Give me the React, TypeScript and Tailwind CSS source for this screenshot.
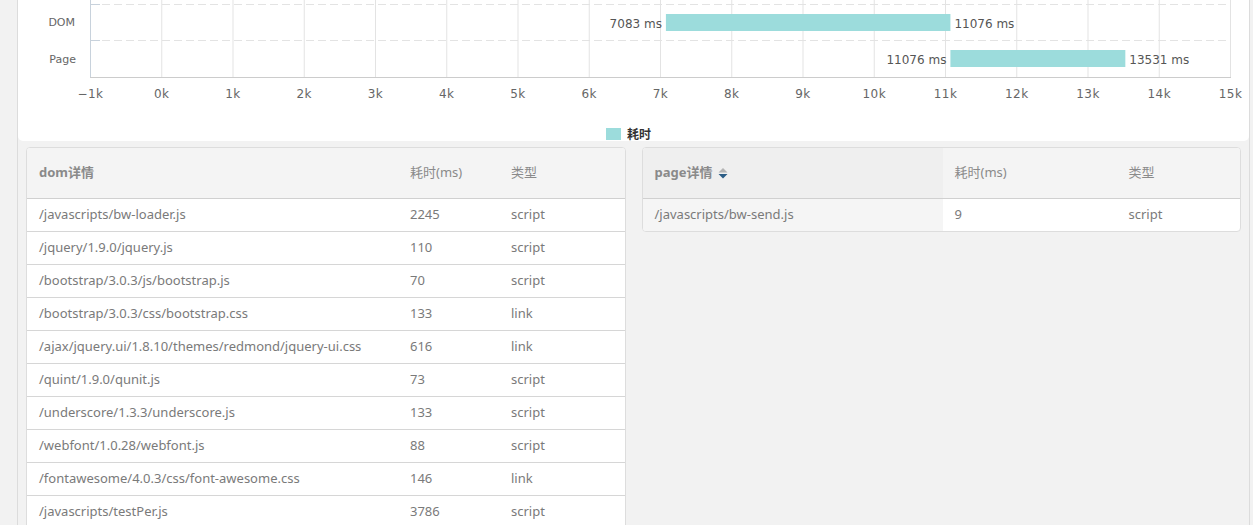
const ticks = Array.from({ length: 17 }, (_, i) => i - 1);

const domRows = [
  ["/javascripts/bw-loader.js", "2245", "script"],
  ["/jquery/1.9.0/jquery.js", "110", "script"],
  ["/bootstrap/3.0.3/js/bootstrap.js", "70", "script"],
  ["/bootstrap/3.0.3/css/bootstrap.css", "133", "link"],
  ["/ajax/jquery.ui/1.8.10/themes/redmond/jquery-ui.css", "616", "link"],
  ["/quint/1.9.0/qunit.js", "73", "script"],
  ["/underscore/1.3.3/underscore.js", "133", "script"],
  ["/webfont/1.0.28/webfont.js", "88", "script"],
  ["/fontawesome/4.0.3/css/font-awesome.css", "146", "link"],
  ["/javascripts/testPer.js", "3786", "script"],
];

// plot area in svg coords
const X0 = 72;
const STEP = 71.25;
const xOf = (k: number) => X0 + (k + 1) * STEP;

function TimelineChart() {
  const font = { fontFamily: "'DejaVu Sans', Verdana, sans-serif" };
  return (
    <svg width="1231" height="141" className="block">
      {/* vertical grid */}
      {ticks.map((k) => (
        <line key={k} x1={xOf(k) + 0.5} x2={xOf(k) + 0.5} y1={0} y2={77} stroke="#e3e3e3" />
      ))}
      {/* dashed category separators */}
      {[4.5, 40.5].map((y) => (
        <g key={y}>
          <line x1={X0} x2={1212} y1={y} y2={y} stroke="#e3e3e3" strokeDasharray="8 4" />
          <line x1={X0} x2={X0 + 10} y1={y} y2={y} stroke="#c8d2dc" />
        </g>
      ))}
      <line x1={X0 + 0.5} x2={X0 + 0.5} y1={0} y2={77} stroke="#c8d2dc" />
      <line x1={X0} x2={1213} y1={77.5} y2={77.5} stroke="#cccccc" />

      {/* categories */}
      <text x={57} y={26} textAnchor="end" fontSize="11" fill="#666" style={font}>DOM</text>
      <text x={58} y={63} textAnchor="end" fontSize="11" fill="#666" style={font}>Page</text>

      {/* bars */}
      <rect x={xOf(7.083)} y={14} width={xOf(11.076) - xOf(7.083)} height={17} fill="#9cdcdc" />
      <rect x={xOf(11.076)} y={50} width={xOf(13.531) - xOf(11.076)} height={17} fill="#9cdcdc" />
      <text x={xOf(7.083) - 4} y={28} textAnchor="end" fontSize="12" fill="#555" style={font}>7083 ms</text>
      <text x={xOf(11.076) + 4} y={28} fontSize="12" fill="#555" style={font}>11076 ms</text>
      <text x={xOf(11.076) - 4} y={64} textAnchor="end" fontSize="12" fill="#555" style={font}>11076 ms</text>
      <text x={xOf(13.531) + 4} y={64} fontSize="12" fill="#555" style={font}>13531 ms</text>

      {/* x axis labels */}
      {ticks.map((k) => (
        <text key={k} x={xOf(k) + 0.5} y={98} textAnchor="middle" fontSize="12" fill="#666" letterSpacing="0.5" style={font}>
          {k < 0 ? `−${-k}k` : `${k}k`}
        </text>
      ))}

      {/* legend */}
      <rect x={588} y={128} width={15} height={12} fill="#9cdcdc" />
      <text x={609} y={139} fontSize="12" fontWeight="bold" fill="#333" style={{ fontFamily: "'Noto Sans CJK SC', sans-serif" }}>耗时</text>
    </svg>
  );
}

function SortIcon() {
  return (
    <svg width="10" height="11" viewBox="0 0 10 11" className="ml-[6px] inline-block">
      <path d="M5 0 L9.5 4.5 L0.5 4.5 Z" fill="#b4b4b4" />
      <path d="M0.5 6 L9.5 6 L5 10.5 Z" fill="#2c5d86" />
    </svg>
  );
}

export default function App() {
  return (
    <div
      className="flex h-[525px] overflow-hidden bg-[#f2f2f2] text-[13px] text-[#7a7a7a]"
      style={{ fontFamily: "'Noto Sans', 'Noto Sans CJK SC', sans-serif" }}
    >
      <div className="w-[17px] shrink-0" />
      <div className="flex w-[1233px] shrink-0 flex-col border-x border-[#dcdcdc]">
        <div className="w-[1231px] rounded-b-[5px] bg-white">
          <TimelineChart />
        </div>

        <div className="flex gap-4 px-2 pt-[6px]">
          {/* dom table */}
          <div className="w-[600px] self-start overflow-hidden rounded-[4px] border border-[#dddddd] bg-white">
            <div className="flex h-[51px] items-center border-b border-[#d0d0d0] bg-[#f4f4f4] font-bold text-[#8a8a8a]">
              <div className="w-[371px] pl-3">dom详情</div>
              <div className="w-[101px] pl-3 font-normal">耗时(ms)</div>
              <div className="pl-3 font-normal">类型</div>
            </div>
            {domRows.map(([path, ms, type]) => (
              <div key={path} className="flex h-[33px] items-center border-b border-[#d6d6d6]">
                <div className="w-[371px] pl-3">{path}</div>
                <div className="w-[101px] pl-3">{ms}</div>
                <div className="pl-3">{type}</div>
              </div>
            ))}
          </div>

          {/* page table */}
          <div className="w-[600px] self-start overflow-hidden rounded-[4px] border border-[#dddddd] bg-white">
            <div className="flex h-[51px] border-b border-[#d0d0d0] bg-[#f4f4f4] text-[#8a8a8a]">
              <div className="flex w-[300px] items-center bg-[#efefef] pl-3 font-bold">
                page详情
                <SortIcon />
              </div>
              <div className="flex w-[174px] items-center pl-3">耗时(ms)</div>
              <div className="flex items-center pl-3">类型</div>
            </div>
            <div className="flex h-[32px] items-center">
              <div className="flex h-full w-[300px] items-center bg-[#f5f5f5] pl-3">/javascripts/bw-send.js</div>
              <div className="w-[174px] pl-3">9</div>
              <div className="pl-3">script</div>
            </div>
          </div>
        </div>
      </div>
    </div>
  );
}
